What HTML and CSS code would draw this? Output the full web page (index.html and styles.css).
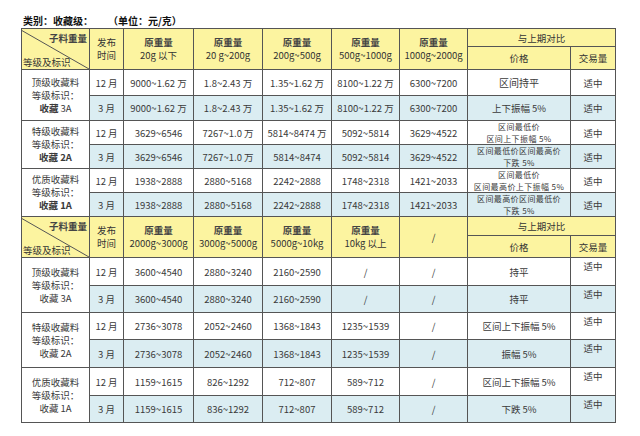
FILE: index.html
```html
<!DOCTYPE html>
<html lang="zh-CN">
<head>
<meta charset="utf-8">
<title>收藏级价格表</title>
<link rel="stylesheet" href="styles.css">
</head>
<body>
<div class="page">
  <div class="title"><span>类别：收藏级：</span><span class="unit">（单位：元/克）</span></div>
  <table class="grid">
    <colgroup>
      <col class="c-grade"><col class="c-time"><col class="c-w1"><col class="c-w2"><col class="c-w3"><col class="c-w4"><col class="c-w5"><col class="c-price"><col class="c-vol">
    </colgroup>
    <tbody>
      <tr class="h-top">
        <td class="hd diag" rowspan="2">
          <svg class="diag-line" viewBox="0 0 100 100" preserveAspectRatio="none"><line x1="0" y1="4" x2="100" y2="100" stroke="#555" stroke-width="1" vector-effect="non-scaling-stroke"/></svg>
          <span class="d-top">子料重量</span>
          <span class="d-bot">等级及标识</span>
        </td>
        <td class="hd two" rowspan="2">发布<br>时间</td>
        <td class="hd two" rowspan="2"><b>原重量</b><br>20g 以下</td>
        <td class="hd two" rowspan="2"><b>原重量</b><br>20 g~200g</td>
        <td class="hd two" rowspan="2"><b>原重量</b><br>200g~500g</td>
        <td class="hd two" rowspan="2"><b>原重量</b><br>500g~1000g</td>
        <td class="hd two" rowspan="2"><b>原重量</b><br>1000g~2000g</td>
        <td class="hd" colspan="2">与上期对比</td>
      </tr>
      <tr class="h-bot">
        <td class="hd">价格</td>
        <td class="hd">交易量</td>
      </tr>

      <tr class="r26">
        <td class="grade" rowspan="2">顶级收藏料<br>等级标识：<br><b>收藏</b> 3A</td>
        <td>12 月</td><td>9000~1.62 万</td><td>1.8~2.43 万</td><td>1.35~1.62 万</td><td>8100~1.22 万</td><td>6300~7200</td><td class="big">区间持平</td><td>适中</td>
      </tr>
      <tr class="r25 alt">
        <td>3 月</td><td>9000~1.62 万</td><td>1.8~2.43 万</td><td>1.35~1.62 万</td><td>8100~1.22 万</td><td>6300~7200</td><td>上下振幅 5%</td><td>适中</td>
      </tr>

      <tr class="r23">
        <td class="grade" rowspan="2">特级收藏料<br>等级标识：<br><b>收藏 2A</b></td>
        <td>12 月</td><td>3629~6546</td><td>7267~1.0 万</td><td>5814~8474 万</td><td>5092~5814</td><td>3629~4522</td><td class="dbl">区间最低价<br>区间上下振幅 5%</td><td>适中</td>
      </tr>
      <tr class="r24 alt">
        <td>3 月</td><td>3629~6546</td><td>7267~1.0 万</td><td>5814~8474</td><td>5092~5814</td><td>3629~4522</td><td class="dbl">区间最低价区间最高价<br>下跌 5%</td><td>适中</td>
      </tr>

      <tr class="r24">
        <td class="grade" rowspan="2">优质收藏料<br>等级标识：<br><b>收藏 1A</b></td>
        <td>12 月</td><td>1938~2888</td><td>2880~5168</td><td>2242~2888</td><td>1748~2318</td><td>1421~2033</td><td class="dbl">区间最低价<br>区间最高价上下振幅 5%</td><td>适中</td>
      </tr>
      <tr class="r24 alt">
        <td>3 月</td><td>1938~2888</td><td>2880~5168</td><td>2242~2888</td><td>1748~2318</td><td>1421~2033</td><td class="dbl">区间最高价区间最低价<br>下跌 5%</td><td>适中</td>
      </tr>

      <tr class="h-top2">
        <td class="hd diag" rowspan="2">
          <svg class="diag-line" viewBox="0 0 100 100" preserveAspectRatio="none"><line x1="0" y1="4" x2="100" y2="100" stroke="#555" stroke-width="1" vector-effect="non-scaling-stroke"/></svg>
          <span class="d-top">子料重量</span>
          <span class="d-bot">等级及标识</span>
        </td>
        <td class="hd two" rowspan="2">发布<br>时间</td>
        <td class="hd two" rowspan="2"><b>原重量</b><br>2000g~3000g</td>
        <td class="hd two" rowspan="2"><b>原重量</b><br>3000g~5000g</td>
        <td class="hd two" rowspan="2"><b>原重量</b><br>5000g~10kg</td>
        <td class="hd two" rowspan="2"><b>原重量</b><br>10kg 以上</td>
        <td class="hd" rowspan="2">/</td>
        <td class="hd" colspan="2">与上期对比</td>
      </tr>
      <tr class="h-bot2">
        <td class="hd">价格</td>
        <td class="hd">交易量</td>
      </tr>

      <tr class="r28">
        <td class="grade" rowspan="2">顶级收藏料<br>等级标识：<br>收藏 3A</td>
        <td>12 月</td><td>3600~4540</td><td>2880~3240</td><td>2160~2590</td><td>/</td><td>/</td><td>持平</td><td class="topv">适中</td>
      </tr>
      <tr class="r27 alt">
        <td>3 月</td><td>3600~4540</td><td>2880~3240</td><td>2160~2590</td><td>/</td><td>/</td><td>持平</td><td class="topv">适中</td>
      </tr>

      <tr class="r27">
        <td class="grade" rowspan="2">特级收藏料<br>等级标识：<br>收藏 2A</td>
        <td>12 月</td><td>2736~3078</td><td>2052~2460</td><td>1368~1843</td><td>1235~1539</td><td>/</td><td>区间上下振幅 5%</td><td class="topv">适中</td>
      </tr>
      <tr class="r28 alt">
        <td>3 月</td><td>2736~3078</td><td>2052~2460</td><td>1368~1843</td><td>1235~1539</td><td>/</td><td>振幅 5%</td><td class="topv">适中</td>
      </tr>

      <tr class="r28">
        <td class="grade" rowspan="2">优质收藏料<br>等级标识：<br>收藏 1A</td>
        <td>12 月</td><td>1159~1615</td><td>826~1292</td><td>712~807</td><td>589~712</td><td>/</td><td>区间上下振幅 5%</td><td class="topv">适中</td>
      </tr>
      <tr class="r27 alt">
        <td>3 月</td><td>1159~1615</td><td>836~1292</td><td>712~807</td><td>589~712</td><td>/</td><td>下跌 5%</td><td class="topv">适中</td>
      </tr>
    </tbody>
  </table>
</div>
</body>
</html>
```

FILE: styles.css
```css
html, body {
  margin: 0;
  padding: 0;
  background: #ffffff;
}

.page {
  padding: 14px 0 0 21px;
  font-family: "Noto Sans CJK SC", "Noto Sans", sans-serif;
  color: #3a3a3a;
}

.title {
  display: flex;
  font-size: 10px;
  font-weight: 700;
  color: #111;
  line-height: 14px;
  padding-left: 2px;
}

.title .unit {
  margin-left: 15px;
}

.grid {
  border-collapse: collapse;
  table-layout: fixed;
  width: 594px;
  font-size: 9.5px;
}

.c-grade { width: 68px; }
.c-time  { width: 34px; }
.c-w1    { width: 70px; }
.c-w2    { width: 69px; }
.c-w3    { width: 69px; }
.c-w4    { width: 68px; }
.c-w5    { width: 68px; }
.c-price { width: 103px; }
.c-vol   { width: 45px; }

.grid td {
  border: 1px solid #555;
  padding: 0;
  text-align: center;
  vertical-align: middle;
  line-height: 12px;
  white-space: nowrap;
  overflow: hidden;
  background: #ffffff;
}

.grid tr.alt td {
  background: #dbedf2;
}

.grid td.hd {
  background: #fcf4a0;
  color: #333;
}

.grid td.two {
  line-height: 13px;
}

.grid td.hd b {
  font-weight: 700;
  color: #444;
}

.grid td.grade {
  background: #ffffff;
  line-height: 13px;
}

.grid td.grade b {
  font-weight: 700;
}

.grid td.dbl {
  font-size: 8px;
  line-height: 11.5px;
  letter-spacing: 0.4px;
}

.grid td.big {
  font-size: 10px;
}

.grid td.topv {
  vertical-align: top;
  padding-top: 2px;
}

.h-top  { height: 18px; }
.h-bot  { height: 23px; }
.h-top2 { height: 19px; }
.h-bot2 { height: 22px; }
.r23 { height: 23px; }
.r24 { height: 24px; }
.r25 { height: 25px; }
.r26 { height: 26px; }
.r27 { height: 27px; }
.r28 { height: 28px; }

.grid td.diag {
  position: relative;
  text-align: left;
}

.diag-line {
  position: absolute;
  left: 0;
  top: 0;
  width: 100%;
  height: 100%;
}

.d-top {
  position: absolute;
  right: 2px;
  top: 3px;
  font-weight: 700;
  color: #444;
}

.d-bot {
  position: absolute;
  left: 1px;
  bottom: 1px;
}
```
